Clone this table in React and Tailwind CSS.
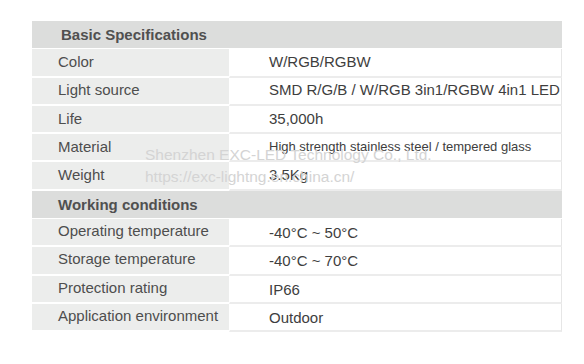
const basic = [
  ['Color', 'W/RGB/RGBW'],
  ['Light source', 'SMD R/G/B / W/RGB 3in1/RGBW 4in1 LED'],
  ['Life', '35,000h'],
  ['Material', 'High strength stainless steel / tempered glass', 'small'],
  ['Weight', '3.5Kg'],
];

const working = [
  ['Operating temperature', '-40°C ~ 50°C', 'low'],
  ['Storage temperature', '-40°C ~ 70°C', 'low'],
  ['Protection rating', 'IP66', 'low'],
  ['Application environment', 'Outdoor', 'low'],
];

const Header = ({ title, inset }) => (
  <div
    className={
      'h-[28.3px] bg-[#dcdddc] border-b border-white flex items-center text-[15px] font-bold text-[#505050] ' +
      (inset ? 'pl-[26px]' : 'pl-[29px]')
    }
  >
    <span className="mt-[1px]">{title}</span>
  </div>
);

const Row = ({ label, value, kind }) => (
  <div className="h-[28.3px] flex">
    <div className="w-[197px] bg-[#ecedec] border-b-2 border-white flex items-center pl-[26px] text-[15px] text-[#4e4e4e]">
      <span className={kind === 'low' ? '-mt-[2px]' : kind === 'small' ? '-mt-[1px]' : ''}>{label}</span>
    </div>
    <div
      className={
        'flex-1 bg-white border-b-2 border-l border-r border-l-white border-b-[#ececec] border-r-[#e6e6e6] flex items-center pl-[39px] text-[#3e3e3e] ' +
        (kind === 'small' ? 'text-[13px]' : 'text-[15px]')
      }
    >
      <span className={kind === 'low' ? 'mt-[2px]' : kind === 'small' ? '-mt-[2px]' : ''}>{value}</span>
    </div>
  </div>
);

export default function App() {
  return (
    <div className="w-[584px] h-[364px] bg-white pt-[21px] pl-[32px] font-['Liberation_Sans',Arial,sans-serif] relative overflow-hidden">
      <div className="w-[530px]">
        <Header title="Basic Specifications" />
        {basic.map(([l, v, k]) => (
          <Row key={l} label={l} value={v} kind={k} />
        ))}
        <Header title="Working conditions" inset />
        {working.map(([l, v, k]) => (
          <Row key={l} label={l} value={v} kind={k} />
        ))}
      </div>

      {/* watermark */}
      <div className="absolute left-[145px] top-[144px] text-[15.5px] leading-[22px] text-[#d4d4d4] pointer-events-none">
        <p>Shenzhen EXC-LED Technology Co., Ltd.</p>
        <p>https://exc-lightng.en.china.cn/</p>
      </div>
    </div>
  );
}
